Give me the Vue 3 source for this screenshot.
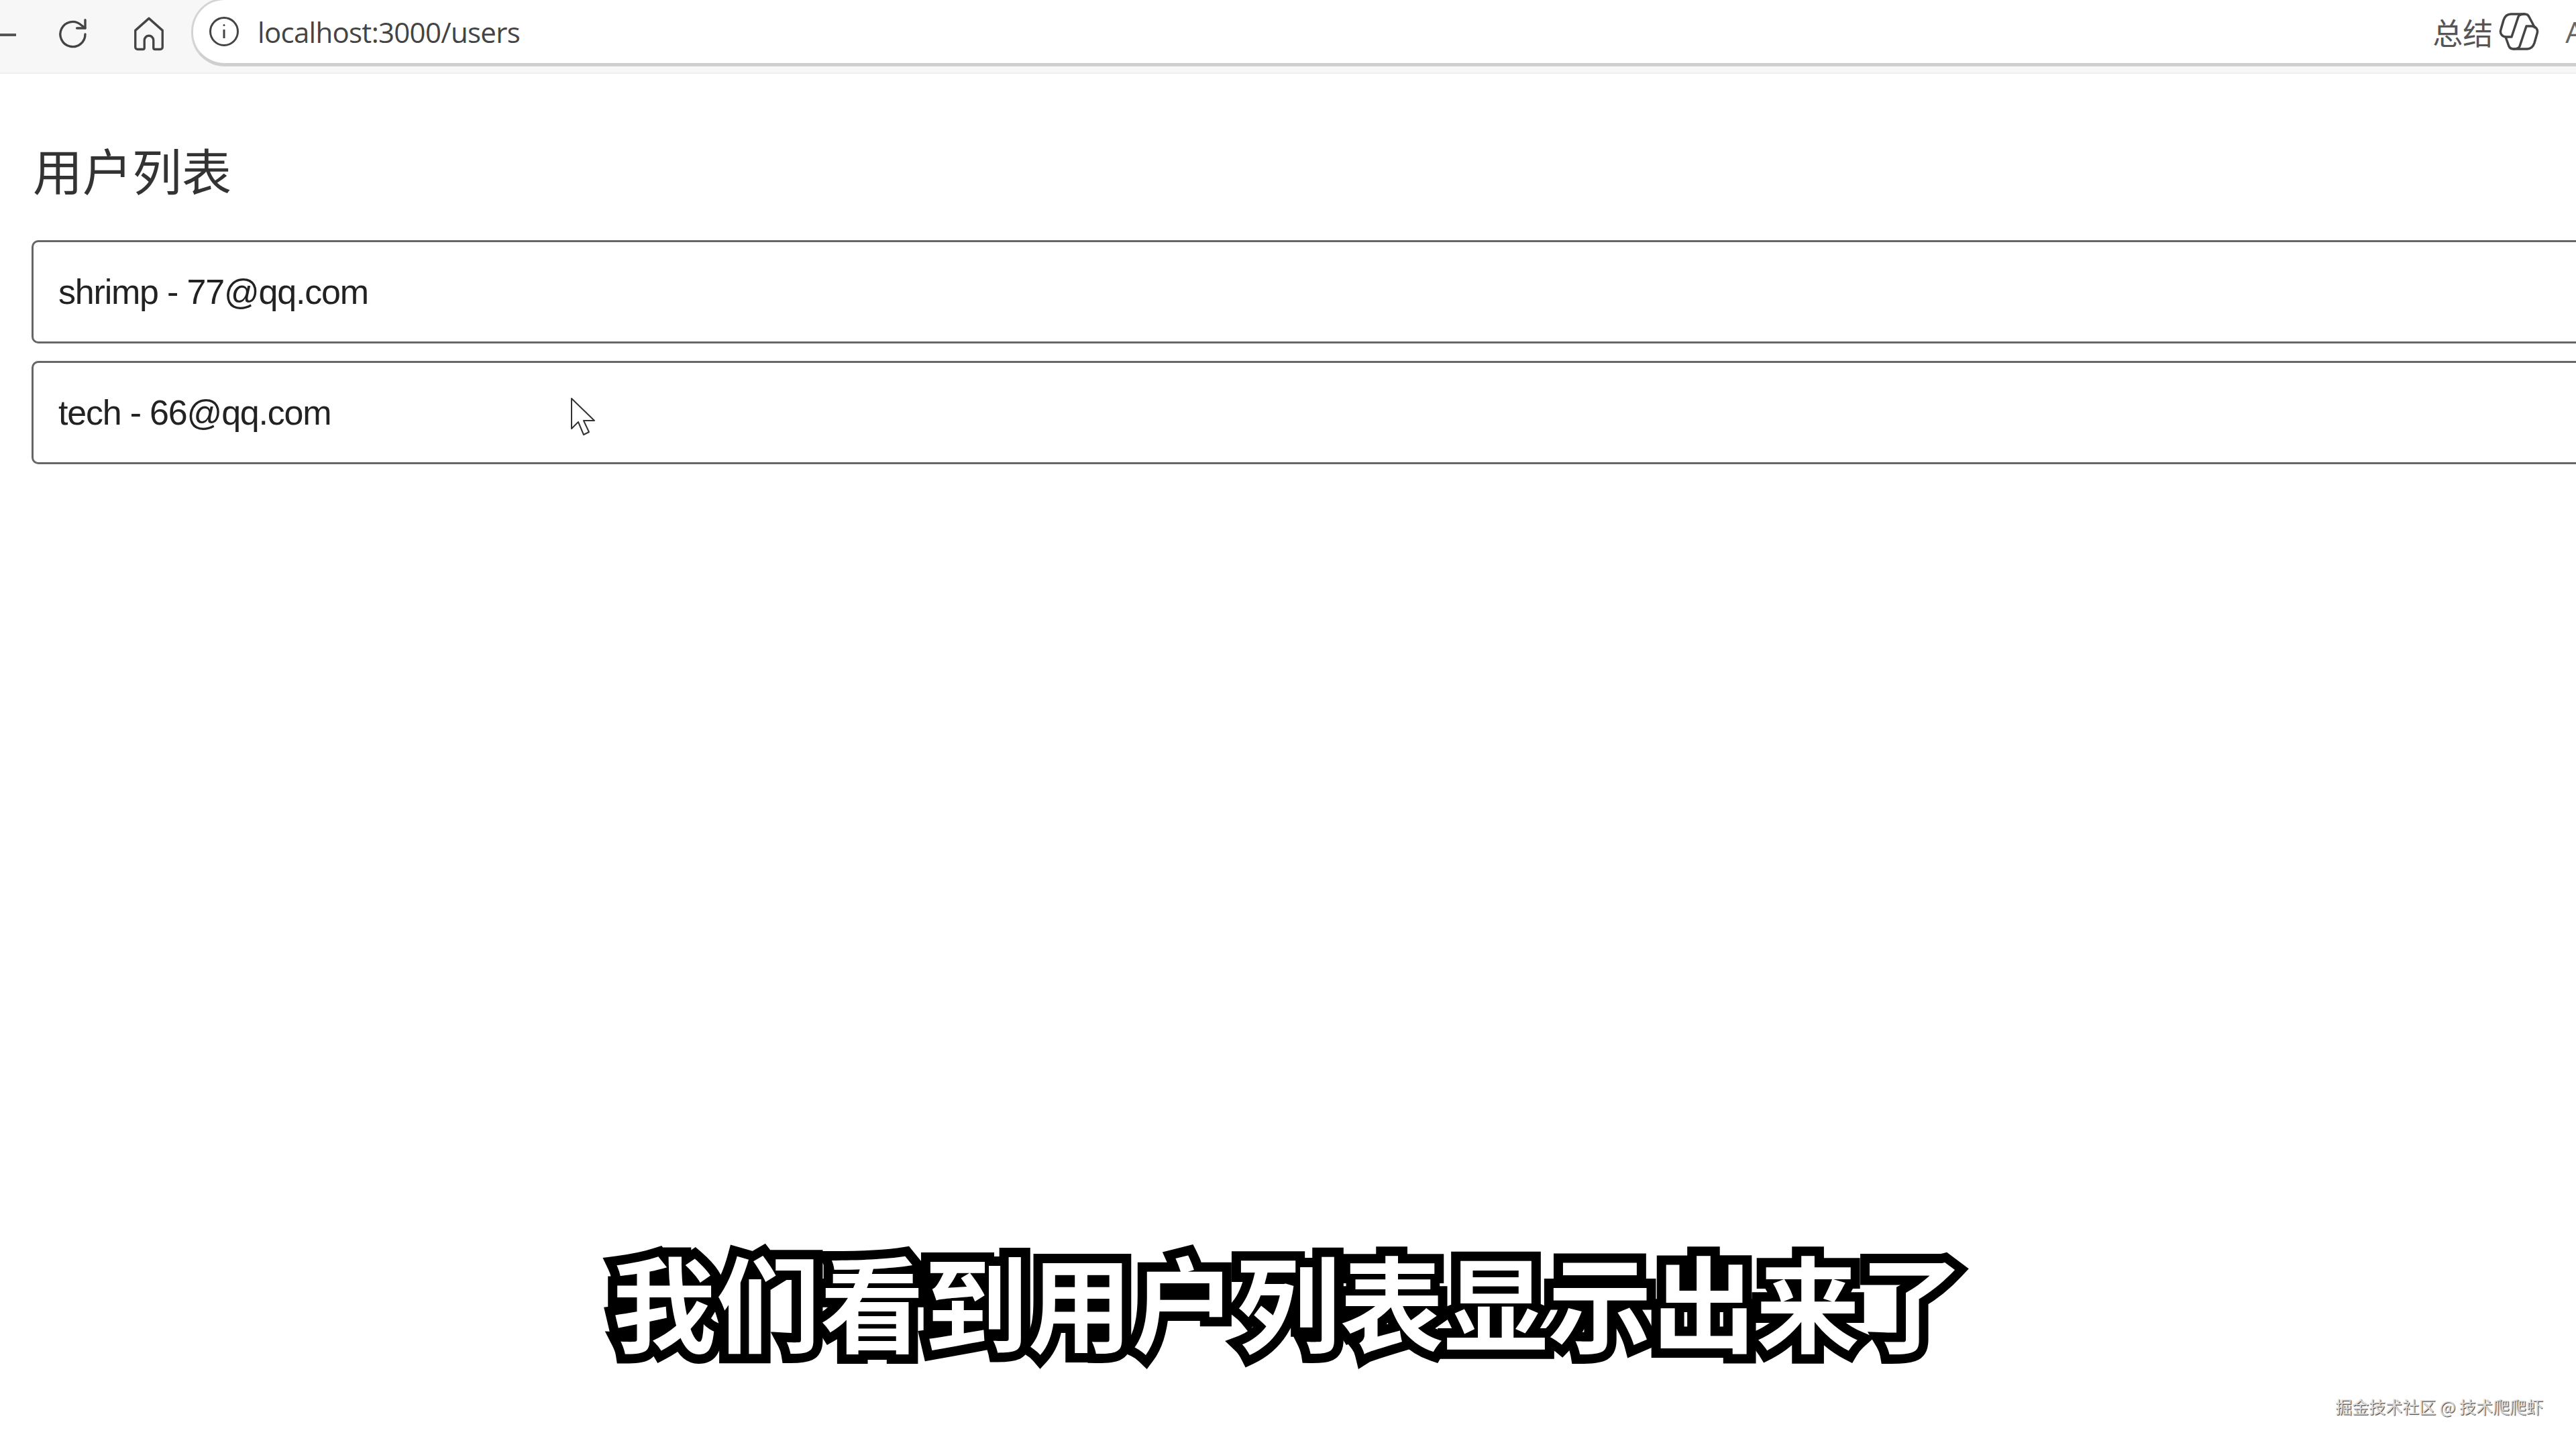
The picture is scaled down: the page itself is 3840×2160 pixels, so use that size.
<script setup>
const users = [
  { name: 'shrimp', email: '77@qq.com' },
  { name: 'tech', email: '66@qq.com' }
]
</script>

<template>
  <div class="screen">
    <header class="toolbar">
      <span class="back-stub"></span>
      <button class="tool reload" aria-label="刷新">
        <svg viewBox="0 0 48 48" width="54" height="54" fill="none" stroke="#444" stroke-width="3" stroke-linecap="round" stroke-linejoin="round">
          <path d="M40 24a16.500 16.500 0 1 1-6-12.700L40 16" />
          <path d="M40 5v11H29" />
        </svg>
      </button>
      <button class="tool home" aria-label="主页">
        <svg viewBox="0 0 48 48" width="54" height="54" fill="none" stroke="#444" stroke-width="3" stroke-linejoin="round">
          <path d="M24 3 L6 19 V41 a3 3 0 0 0 3 3 H16 a2 2 0 0 0 2-2 V32 a6 6 0 0 1 12 0 V42 a2 2 0 0 0 2 2 H39 a3 3 0 0 0 3-3 V19 Z" />
        </svg>
      </button>
      <div class="omnibox">
        <svg class="info" viewBox="0 0 46 46" width="46" height="46" fill="none" stroke="#444" stroke-width="3">
          <circle cx="23" cy="23" r="20.500" />
          <path d="M23 20v13" />
          <circle cx="23" cy="13.500" r="1.500" fill="#444" stroke="none" />
        </svg>
        <span class="url">localhost:3000/users</span>
        <span class="spacer"></span>
        <span class="summary">总结</span>
        <svg class="copilot" viewBox="0 0 60 60" width="60" height="60" fill="none" stroke="#444" stroke-width="3.500" stroke-linejoin="round">
          <path d="M18 4h21a7 7 0 0 1 6 4l9 17" />
          <path d="M18 4c-6 0-9 3-11 9L3 27c-2 6 2 11 8 11h8l10-30c1-3 4-4 10-4" />
          <path d="M42 56H21a7 7 0 0 1-6-4l-5-14" />
          <path d="M42 56c6 0 9-3 11-9l4-14c2-6-2-11-8-11h-8L31 52c-1 3-4 4-10 4" />
        </svg>
        <span class="translate">A</span>
      </div>
    </header>

    <main class="content">
      <h1 class="title">用户列表</h1>
      <ul class="user-list">
        <li v-for="user in users" :key="user.name" class="user-card">{{ user.name }} - {{ user.email }}</li>
      </ul>
    </main>

    <svg class="cursor" viewBox="0 0 40 60" width="40" height="60" fill="#fff" stroke="#333" stroke-width="2" stroke-linejoin="round">
      <path d="M2 2 V47 L12 37 L20 56 L28 52 L20 35 H36 Z" />
    </svg>

    <div class="subtitle">我们看到用户列表显示出来了</div>
    <div class="watermark">掘金技术社区 @ 技术爬爬虾</div>
  </div>
</template>

<style scoped>
.screen {
  position: relative;
  width: 3840px;
  height: 2160px;
  overflow: hidden;
  background: #fff;
  font-family: "Open Sans", "Noto Sans CJK SC", sans-serif;
}
.toolbar {
  display: flex;
  align-items: center;
  height: 110px;
  background: #f7f7f7;
  border-bottom: 2px solid #f0f0f0;
  box-sizing: border-box;
}
.back-stub {
  width: 24px;
  height: 4px;
  margin-top: -4px;
  background: #555;
  flex: none;
}
.tool {
  display: flex;
  align-items: center;
  justify-content: center;
  margin-top: -6px;
  padding: 0;
  border: 0;
  background: none;
  flex: none;
}
.reload {
  margin-left: 58px;
}
.home {
  margin-left: 59px;
}
.omnibox {
  display: flex;
  align-items: center;
  flex: 1;
  height: 102px;
  margin-top: -12px;
  margin-left: 36px;
  padding-left: 23px;
  box-sizing: border-box;
  background: #fff;
  border: 3px solid #d4d4d4;
  border-bottom: 5px solid #cfcfcf;
  border-right: 0;
  border-radius: 50px 0 0 50px;
  overflow: hidden;
}
.url {
  margin-left: 27px;
  font-size: 42px;
  color: #444;
  letter-spacing: -0.7px;
}
.spacer {
  flex: 1;
}
.summary {
  font-size: 45px;
  color: #555;
}
.copilot {
  margin-left: 9px;
}
.translate {
  margin-left: 39px;
  margin-right: -12px;
  font-size: 44px;
  color: #666;
}
.content {
  padding: 0 0 0 47px;
}
.title {
  margin: 102px 0 0 2px;
  font-size: 74px;
  line-height: 80px;
  font-weight: 400;
  color: #333;
  font-family: "Noto Sans CJK SC", sans-serif;
}
.user-list {
  display: flex;
  flex-direction: column;
  gap: 26px;
  margin: 66px -30px 0 0;
  padding: 0;
  list-style: none;
}
.user-card {
  display: flex;
  align-items: center;
  height: 154px;
  padding-left: 37px;
  box-sizing: border-box;
  border: 3px solid #666;
  border-radius: 10px;
  font-family: "Liberation Sans", sans-serif;
  font-size: 52px;
  letter-spacing: -1.2px;
  color: #222;
}
.cursor {
  position: absolute;
  left: 850px;
  top: 592px;
}
.subtitle {
  position: absolute;
  left: 0;
  right: 0;
  top: 1842px;
  text-align: center;
  font-family: "Noto Sans CJK SC", sans-serif;
  font-size: 155px;
  line-height: 190px;
  font-weight: 700;
  color: #fff;
  -webkit-text-stroke: 28px #000;
  paint-order: stroke fill;
}
.watermark {
  position: absolute;
  right: 49px;
  top: 2080px;
  font-family: "Noto Sans CJK SC", sans-serif;
  font-size: 25px;
  line-height: 32px;
  color: #dcdcdc;
  text-shadow: 1px 1px 1px #333;
}
</style>
